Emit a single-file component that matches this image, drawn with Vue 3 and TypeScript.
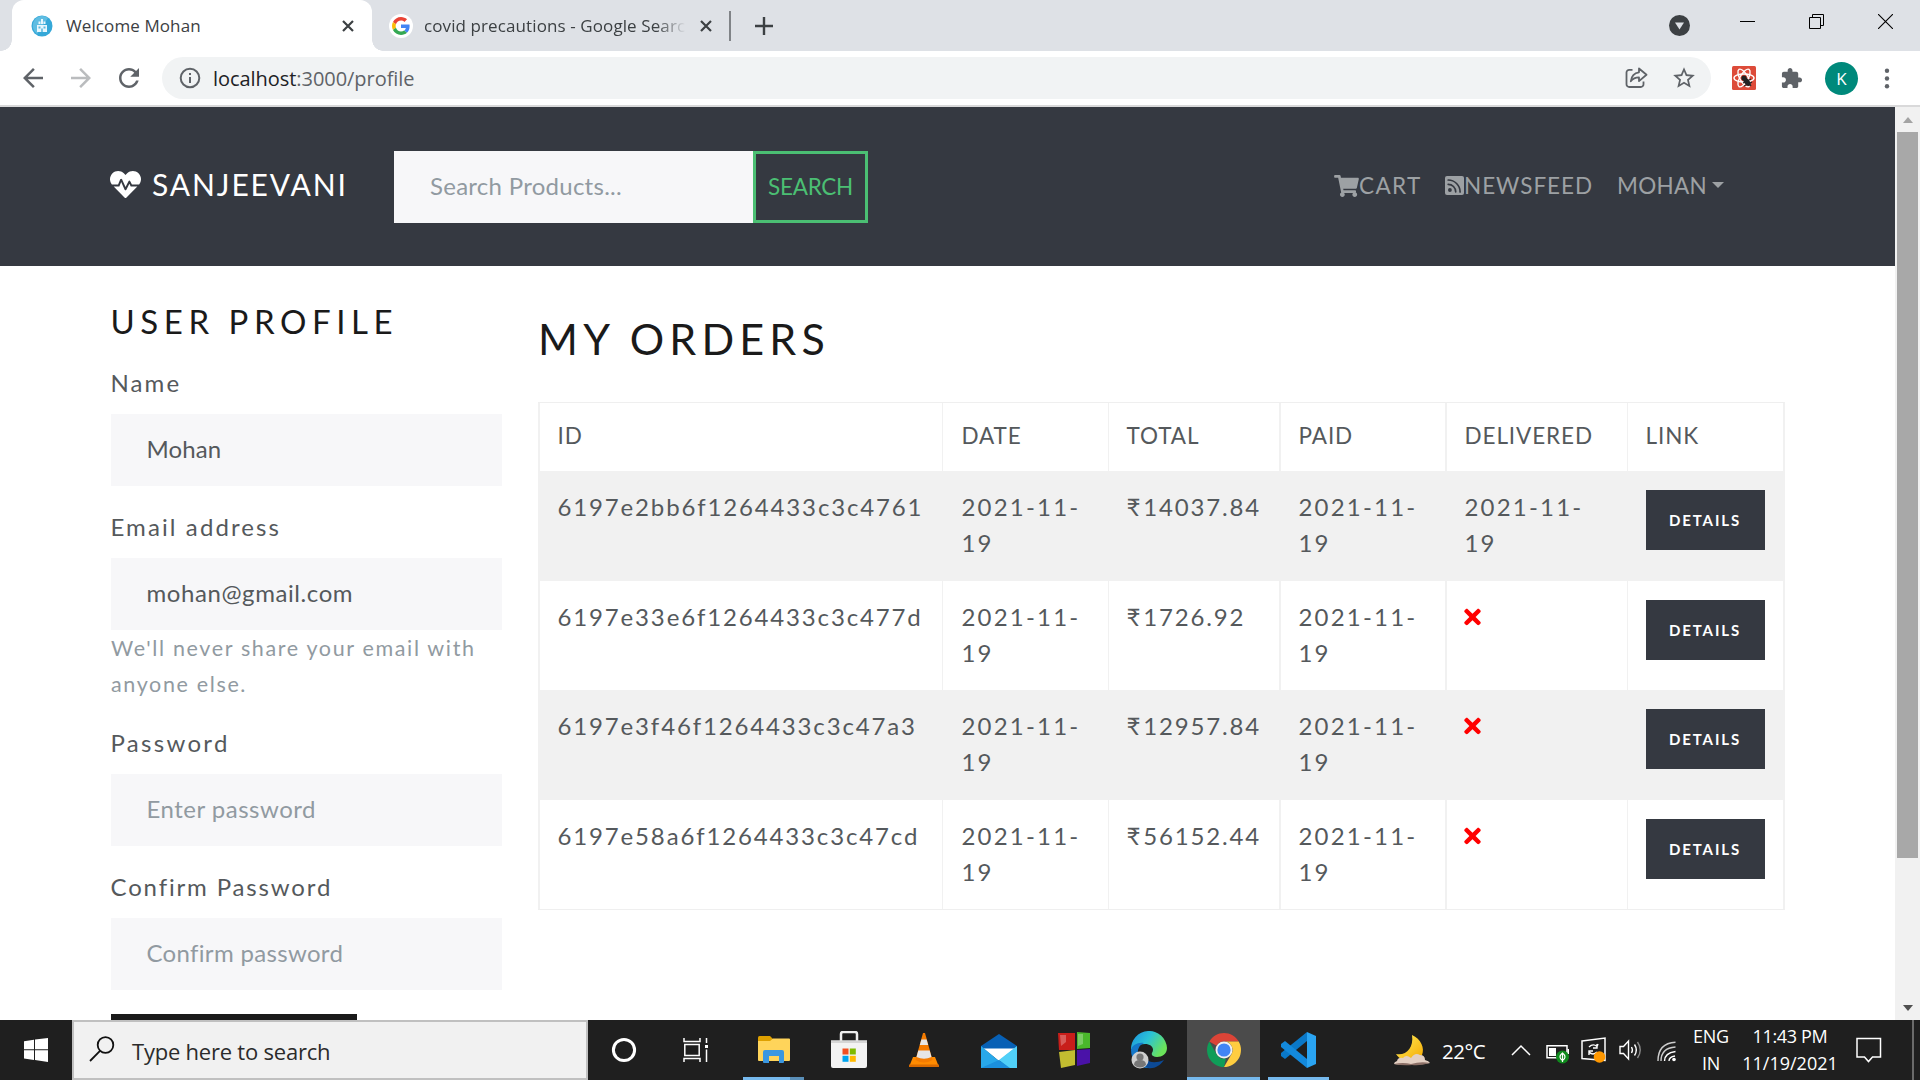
<script setup lang="ts">
interface Order {
  id: string
  date: string
  total: string
  paid: string
  delivered: string | null
}

const day = '2021-11-\n19'
const orders: Order[] = [
  { id: '6197e2bb6f1264433c3c4761', date: day, total: '14037.84', paid: day, delivered: day },
  { id: '6197e33e6f1264433c3c477d', date: day, total: '1726.92', paid: day, delivered: null },
  { id: '6197e3f46f1264433c3c47a3', date: day, total: '12957.84', paid: day, delivered: null },
  { id: '6197e58a6f1264433c3c47cd', date: day, total: '56152.44', paid: day, delivered: null },
]
const headings = ['ID', 'DATE', 'TOTAL', 'PAID', 'DELIVERED', 'LINK']
</script>

<template>
  <div class="screen">
    <div class="tabs">
      <div class="tab active">
        <svg class="fav" width="22" height="24" viewBox="0 0 22 24">
          <circle cx="11" cy="12" r="10.500" fill="#35a8d8" />
          <path d="M3 7a9.500 9.500 0 0 1 14-3L6 20A10 10 0 0 1 3 7z" fill="#7ccbea" opacity=".6" />
          <path d="M6 11h10v7H6zM7.500 7.500h2v2.500h-2zM12.500 7.500h2v2.500h-2zM10 5h2v5h-2z" fill="#e8f7fd" />
          <path d="M7.500 12.500h2v2h-2zM12.500 12.500h2v2h-2zM10.200 14.500h1.600V18h-1.600z" fill="#5bb9df" />
        </svg>
        <span class="tab-title">Welcome Mohan</span>
        <svg class="x" width="12" height="12" viewBox="0 0 12 12"><path d="M1 1l10 10M11 1L1 11" stroke="#3c4043" stroke-width="2.200" /></svg>
      </div>
      <div class="tab second">
        <span class="gwrap">
          <svg width="18" height="18" viewBox="0 0 48 48">
            <path fill="#EA4335" d="M24 9.500c3.540 0 6.710 1.220 9.210 3.600l6.850-6.850C35.900 2.380 30.470 0 24 0 14.620 0 6.510 5.380 2.560 13.220l7.980 6.190C12.430 13.720 17.740 9.500 24 9.500z" />
            <path fill="#4285F4" d="M46.980 24.550c0-1.570-.15-3.090-.38-4.550H24v9.020h12.940c-.58 2.960-2.260 5.480-4.780 7.180l7.730 6c4.510-4.180 7.090-10.360 7.090-17.650z" />
            <path fill="#FBBC05" d="M10.530 28.590c-.48-1.450-.76-2.990-.76-4.590s.27-3.140.76-4.590l-7.980-6.190C.92 16.460 0 20.120 0 24c0 3.880.92 7.540 2.560 10.780l7.970-6.190z" />
            <path fill="#34A853" d="M24 48c6.480 0 11.930-2.130 15.890-5.810l-7.730-6c-2.150 1.450-4.920 2.300-8.160 2.300-6.260 0-11.570-4.220-13.470-9.910l-7.980 6.190C6.510 42.620 14.620 48 24 48z" />
          </svg>
        </span>
        <span class="tab-title fade">covid precautions - Google Search</span>
        <svg class="x" width="12" height="12" viewBox="0 0 12 12"><path d="M1 1l10 10M11 1L1 11" stroke="#3c4043" stroke-width="2.200" /></svg>
      </div>
      <i class="tab-sep"></i>
      <svg class="plus" width="18" height="18" viewBox="0 0 18 18"><path d="M9 0v18M0 9h18" stroke="#3c4043" stroke-width="2.400" /></svg>
      <div class="window-buttons">
        <svg width="21" height="21" viewBox="0 0 21 21" class="down"><circle cx="10.500" cy="10.500" r="10.500" fill="#3c4043" /><path d="M6 7.500h9l-4.500 7z" fill="#dee1e6" /></svg>
        <svg width="15" height="15" viewBox="0 0 15 15"><path d="M0 7.500h15" stroke="#000" /></svg>
        <svg width="15" height="15" viewBox="0 0 15 15" fill="none" stroke="#000"><path d="M.5 3.500h11v11H.5zM3.500 3.500v-3h11v11h-3" /></svg>
        <svg width="15" height="15" viewBox="0 0 15 15"><path d="M0 0l15 15M15 0L0 15" stroke="#000" stroke-width="1.100" /></svg>
      </div>
    </div>

    <div class="toolbar">
      <svg class="nav-ic" width="30" height="30" viewBox="0 0 24 24"><path fill="#5f6368" d="M20 11H7.830l5.590-5.590L12 4l-8 8 8 8 1.410-1.410L7.830 13H20v-2z" /></svg>
      <svg class="nav-ic" width="30" height="30" viewBox="0 0 24 24"><path fill="#babcbe" d="M4 11h12.170l-5.590-5.590L12 4l8 8-8 8-1.410-1.410L16.170 13H4v-2z" /></svg>
      <svg class="nav-ic" width="30" height="30" viewBox="0 0 24 24"><path fill="#5f6368" d="M17.650 6.350C16.200 4.900 14.210 4 12 4c-4.420 0-7.990 3.580-7.990 8s3.570 8 7.990 8c3.730 0 6.840-2.550 7.730-6h-2.080c-.82 2.330-3.040 4-5.650 4-3.310 0-6-2.690-6-6s2.690-6 6-6c1.660 0 3.140.69 4.220 1.780L13 11h7V4l-2.350 2.350z" /></svg>
      <div class="omnibox">
        <svg width="22" height="22" viewBox="0 0 22 22"><circle cx="11" cy="11" r="9.300" fill="none" stroke="#5f6368" stroke-width="2" /><path d="M10 10h2v6h-2zM10 6h2v2h-2z" fill="#5f6368" /></svg>
        <span class="url"><b>localhost</b>:3000/profile</span>
        <svg class="share" width="24" height="24" viewBox="0 0 24 24" fill="none" stroke="#5f6368" stroke-width="1.800" stroke-linejoin="round"><path d="M8.500 3.800H5.200A2.700 2.700 0 0 0 2.500 6.500v11.800A2.700 2.700 0 0 0 5.200 21h11.600a2.700 2.700 0 0 0 2.700-2.700v-2.800" /><path d="M15 2.500l7.500 6.300-7.500 6.300v-3.700c-3.700 0-6.300 1.200-8.200 3.900.6-5 3.400-8.400 8.200-9z" /></svg>
        <svg class="star" width="26" height="26" viewBox="0 0 24 24"><path fill="#5f6368" d="M22 9.240l-7.190-.62L12 2 9.190 8.630 2 9.240l5.460 4.730L5.820 21 12 17.270 18.180 21l-1.630-7.030L22 9.240zM12 15.400l-3.760 2.270 1-4.280-3.320-2.880 4.380-.38L12 6.100l1.710 4.040 4.380.38-3.320 2.880 1 4.280L12 15.400z" /></svg>
      </div>
      <svg class="ext" width="24" height="24" viewBox="0 0 24 24">
        <rect width="24" height="24" rx="1.500" fill="#dd4b39" />
        <g fill="none" stroke="#fff" stroke-width="1.400"><ellipse cx="12" cy="12" rx="10" ry="4" /><ellipse cx="12" cy="12" rx="10" ry="4" transform="rotate(60 12 12)" /><ellipse cx="12" cy="12" rx="10" ry="4" transform="rotate(120 12 12)" /></g>
        <circle cx="12" cy="12" r="2.600" fill="#222" /><ellipse cx="15" cy="16" rx="2.600" ry="4.600" transform="rotate(-40 15 16)" fill="#222" /><path d="M11 17l8-4M12 20l8-4M14 12l5 8" stroke="#222" stroke-width="1.200" />
      </svg>
      <svg class="puzzle" width="23" height="23" viewBox="0 0 24 24"><path fill="#5f6368" d="M20.500 11H19V7c0-1.100-.9-2-2-2h-4V3.500C13 2.120 11.880 1 10.500 1S8 2.120 8 3.500V5H4c-1.100 0-1.990.9-1.990 2v3.800H3.500c1.490 0 2.700 1.210 2.700 2.700s-1.210 2.700-2.700 2.700H2V20c0 1.100.9 2 2 2h3.800v-1.500c0-1.490 1.210-2.700 2.700-2.700 1.490 0 2.700 1.210 2.700 2.700V22H17c1.100 0 2-.9 2-2v-4h1.500c1.380 0 2.500-1.120 2.500-2.500S21.880 11 20.500 11z" /></svg>
      <span class="avatar">K</span>
      <svg width="6" height="21" viewBox="0 0 6 21" fill="#5f6368"><circle cx="3" cy="2.800" r="2.200" /><circle cx="3" cy="10.500" r="2.200" /><circle cx="3" cy="18.200" r="2.200" /></svg>
    </div>

    <div class="viewport">
      <div class="page">
        <header class="navbar">
          <svg class="heart" width="31" height="31" viewBox="0 0 512 512"><path fill="#fff" d="M320.200 243.800l-49.700 99.400c-6 12.100-23.400 11.700-28.900-.6l-56.900-126.300-30 71.700H60.600l182.500 186.500c7.100 7.300 18.600 7.300 25.700 0L451.400 288H342.300l-22.100-44.200zM473.700 73.900l-2.400-2.500c-51.500-52.600-135.800-52.600-187.400 0L256 100l-27.900-28.500c-51.500-52.700-135.900-52.700-187.400 0l-2.400 2.400C-10.400 123.700-12.500 203 31 256h102.400l35.900-86.200c5.400-12.900 23.600-13.100 29.300-.4l58.200 129.300 49-97.900c5.900-11.800 22.700-11.800 28.600 0l27.600 55.200H481c43.500-53 41.400-132.300-7.300-182.100z" /></svg>
          <span class="brand">SANJEEVANI</span>
          <div class="search-field">Search Products...</div>
          <button class="search-btn">SEARCH</button>
          <nav class="links">
            <a class="cart"><svg width="25" height="22" viewBox="0 0 576 512"><path fill="#9da1a4" d="M528.120 301.319l47.273-208C578.806 78.301 567.391 64 551.990 64H159.208l-9.166-44.810C147.758 8.021 137.930 0 126.529 0H24C10.745 0 0 10.745 0 24v16c0 13.255 10.745 24 24 24h69.883l70.248 343.435C147.325 417.100 136 435.222 136 456c0 30.928 25.072 56 56 56s56-25.072 56-56c0-15.674-6.447-29.835-16.824-40h209.647C430.447 426.165 424 440.326 424 456c0 30.928 25.072 56 56 56s56-25.072 56-56c0-22.172-12.888-41.332-31.579-50.405l5.517-24.276c3.413-15.018-8.002-29.319-23.403-29.319H218.117l-6.545-32h293.145c11.206 0 20.920-7.754 23.403-18.681z" /></svg><span>CART</span></a>
            <a class="news"><svg width="19" height="19" viewBox="0 0 19 19"><rect width="19" height="19" rx="2" fill="#9da1a4" /><circle cx="4.900" cy="14" r="1.900" fill="#353941" /><path d="M3.200 8.300a7.500 7.500 0 0 1 7.500 7.500M3.200 4a12 12 0 0 1 11.900 11.900" fill="none" stroke="#353941" stroke-width="1.700" stroke-linecap="round" /></svg><span>NEWSFEED</span></a>
            <a class="user"><span>MOHAN</span><i class="caret"></i></a>
          </nav>
        </header>

        <main class="content">
          <section class="profile">
            <h2>USER PROFILE</h2>
            <label class="s-name">Name</label>
            <div class="field v-name">Mohan</div>
            <label class="s-email">Email address</label>
            <div class="field v-email">mohan@gmail.com</div>
            <small>We'll never share your email with<br />anyone else.</small>
            <label class="s-pass">Password</label>
            <div class="field empty">Enter password</div>
            <label class="s-confirm">Confirm Password</label>
            <div class="field empty confirm">Confirm password</div>
            <div class="update"></div>
          </section>

          <section class="orders">
            <h1>MY ORDERS</h1>
            <table>
              <colgroup><col class="c0" /><col class="c1" /><col class="c2" /><col class="c3" /><col class="c4" /><col class="c5" /></colgroup>
              <thead>
                <tr><th v-for="h in headings" :key="h">{{ h }}</th></tr>
              </thead>
              <tbody>
                <tr v-for="o in orders" :key="o.id">
                  <td>{{ o.id }}</td>
                  <td class="date">{{ o.date }}</td>
                  <td><span class="rupee">₹</span>{{ o.total }}</td>
                  <td class="date">{{ o.paid }}</td>
                  <td class="date"><template v-if="o.delivered">{{ o.delivered }}</template><svg v-else class="cross" width="17" height="24" viewBox="0 0 352 512"><path fill="#f00" d="M242.720 256l100.070-100.070c12.280-12.280 12.280-32.190 0-44.480l-22.240-22.240c-12.280-12.280-32.190-12.280-44.480 0L176 189.280 75.930 89.210c-12.280-12.280-32.190-12.280-44.480 0L9.210 111.450c-12.280 12.280-12.280 32.190 0 44.480L109.280 256 9.210 356.070c-12.280 12.280-12.280 32.190 0 44.480l22.240 22.240c12.280 12.280 32.200 12.280 44.480 0L176 322.720l100.070 100.070c12.280 12.280 32.200 12.280 44.480 0l22.240-22.240c12.280-12.280 12.280-32.190 0-44.480L242.720 256z" /></svg></td>
                  <td><button class="details">DETAILS</button></td>
                </tr>
              </tbody>
            </table>
          </section>
        </main>
      </div>
      <div class="scrollbar">
        <i class="up"></i>
        <div class="thumb"></div>
        <i class="dn"></i>
      </div>
    </div>

    <footer class="taskbar">
      <div class="start"><svg width="24" height="24" viewBox="0 0 24 24" fill="#fff"><path d="M0 3.200L10 1.800v9.500H0zM11 1.600L24 0v11.300H11zM0 12.300h10v9.600L0 20.600zM11 12.300h13V24l-13-1.900z" /></svg></div>
      <div class="search">
        <svg width="26" height="26" viewBox="0 0 26 26" fill="none" stroke="#111" stroke-width="1.800"><circle cx="16.500" cy="9" r="7.800" /><path d="M11 14.800L1 25" /></svg>
        <span>Type here to search</span>
      </div>
      <div class="cell w72"><svg width="26" height="26" viewBox="0 0 26 26"><circle cx="13" cy="13" r="10.600" fill="none" stroke="#fff" stroke-width="3" /></svg></div>
      <div class="cell w72"><svg width="26" height="24" viewBox="0 0 26 24" fill="none" stroke="#fff" stroke-width="1.500"><path d="M1 0v3.500h16V0M1 24v-3.500h16V24M1.800 6.500h14.400v11H1.800zM23.500 0v5M23.500 11.500V24" /><path d="M22 7h3v3h-3z" fill="#fff" stroke="none" /></svg></div>
      <div class="cell explorer">
        <svg width="32" height="28" viewBox="0 0 32 28"><path d="M0 1.500Q0 0 1.500 0H12l3 3v5H0z" fill="#dea000" /><path d="M0 5h12l3-2.500h16q1 0 1 1V24q0 1-1 1H1q-1 0-1-1z" fill="#ffd45a" /><path d="M5 26V16q0-2 2-2h17q2 0 2 2v10q0 1-1 1h-4v-7H11v7H6q-1 0-1-1z" fill="#3b97e0" /></svg>
        <i class="bar split"></i>
      </div>
      <div class="cell">
        <svg width="36" height="38" viewBox="0 0 36 38"><path d="M10 12V3q0-2 2-2h12q2 0 2 2v9" fill="none" stroke="#eee" stroke-width="2.500" /><path d="M0 9.500h36V35q0 2-2 2H2q-2 0-2-2z" fill="#f3f3f3" /><path d="M0 9.500h36v2.500H0z" fill="#d6d6d6" /><path d="M11.500 17.500h6v6h-6z" fill="#f25022" /><path d="M18.800 17.500h6v6h-6z" fill="#7fba00" /><path d="M11.500 24.800h6v6h-6z" fill="#00a4ef" /><path d="M18.800 24.800h6v6h-6z" fill="#ffb900" /></svg>
      </div>
      <div class="cell">
        <svg width="32" height="36" viewBox="0 0 32 36"><path d="M5 25h22l4 10H1z" fill="#ff8b00" /><path d="M1 32.500h30V35H1z" fill="#d96a00" /><path d="M15 1h2l7.500 27q-8.500 5-17 0z" fill="#f47b00" /><path d="M13.400 7.500h5.200l1.600 5.500h-8.400zM10.300 18.500h11.400l1.800 6.500q-7.500 3.500-15 0z" fill="#e6e6e6" /></svg>
      </div>
      <div class="cell">
        <svg width="36" height="35" viewBox="0 0 36 35"><path d="M0 13L18 1l18 12v4H0z" fill="#0760b5" /><path d="M2.500 15.500h31L18 28z" fill="#fff" /><path d="M0 13l18 15 9 7H0z" fill="#28a8ea" /><path d="M36 13v22H27l-9-8z" fill="#50d0f8" /><path d="M0 35l18-8 11 8z" fill="#1b90dd" /></svg>
      </div>
      <div class="cell">
        <svg width="34" height="36" viewBox="0 0 34 36"><path d="M1 1h17v17H2z" fill="#c81e1a" /><path d="M20 0l13 1v15l-13 1z" fill="#4ab82b" /><path d="M2 20l16-2v15L4 36z" fill="#c2bd30" /><path d="M20 18l13-1v14l-13 3z" fill="#4a12a8" /><path d="M3 3h6v7L4 14zM21 2h5v10l-5 2z" fill="#fff" opacity=".28" /></svg>
      </div>
      <div class="cell">
        <svg width="38" height="38" viewBox="0 0 38 38">
          <defs><linearGradient id="eg" x1="0" y1="0" x2="1" y2=".5"><stop offset="0" stop-color="#1a8fe0" /><stop offset=".5" stop-color="#2bc3d6" /><stop offset="1" stop-color="#6be35a" /></linearGradient></defs>
          <path d="M1 19A18 18 0 0 1 37 17c0 6-5 9-10 9-4 0-6-2-5-4 3-5-1-9-7-9-7 0-12 3-14 6z" fill="url(#eg)" />
          <path d="M1 19c1-5 7-8 13-7-5 2-7 7-6 12 1 7 7 11 13 13C9 38 1 30 1 19z" fill="#1477c9" />
          <path d="M13 21c0 9 9 13 21 8-4 6-10 9-16 8-6-3-9-10-5-16z" fill="#0c4a96" />
          <circle cx="10" cy="29" r="8.500" fill="#cfcfcf" /><circle cx="10" cy="26" r="3.600" fill="#777" /><path d="M4 34q0-5 6-5t6 5q-6 5-12 0z" fill="#777" />
        </svg>
      </div>
      <div class="cell on">
        <svg width="34" height="34" viewBox="0 0 34 34">
          <path d="M2.300 8.500A17 17 0 0 1 31.700 8.500H17a8.500 8.500 0 0 0-7.400 4.300z" fill="#db4437" />
          <path d="M2.300 8.500l7.300 12.700A8.500 8.500 0 0 0 19 25.300L17 34A17 17 0 0 1 2.300 8.500z" fill="#0f9d58" />
          <path d="M31.700 8.500A17 17 0 0 1 17 34l7.400-12.700A8.500 8.500 0 0 0 17 8.500z" fill="#ffcd40" />
          <circle cx="17" cy="17" r="8.500" fill="#f1f1f1" /><circle cx="17" cy="17" r="6.600" fill="#4285f4" />
        </svg>
        <i class="bar full"></i>
      </div>
      <div class="cell vs">
        <svg width="36" height="36" viewBox="0 0 36 36"><path d="M26 0l9 4v28l-9 4z" fill="#2aa4f2" /><path d="M26 0v9L4 27l-4-3v-3z" fill="#0a78c8" /><path d="M26 36v-9L4 9l-4 3v3z" fill="#1389dc" /></svg>
        <i class="bar"></i>
      </div>

      <div class="tray">
        <svg class="moon" width="36" height="31" viewBox="0 0 36 31"><defs><linearGradient id="mg" x1="0" y1="0" x2="1" y2="1"><stop offset="0" stop-color="#ffef5c" /><stop offset="1" stop-color="#f5a800" /></linearGradient></defs><path d="M18 0c9 4 13 13 10 20-4 9-20 9-26-1 10 2 18-6 16-19z" fill="url(#mg)" /><path d="M3 26q1-4 6-3 3-4 8 0 4-6 9-3 5 0 5 5 4 1 5 3-9 2-17 1-9 2-19 0 0-2 3-3z" fill="#e3cfc2" /><path d="M0 29q9-2 17 0 10-3 19-1-10 3-18 2-9 1-18-1z" fill="#8b6f66" /></svg>
        <span class="temp">22°C</span>
        <svg class="chev" width="20" height="12" viewBox="0 0 20 12"><path d="M1 11l9-9 9 9" fill="none" stroke="#fff" stroke-width="1.500" /></svg>
        <svg class="batt" width="24" height="24" viewBox="0 0 24 24"><path d="M1 4.800h20v12H1z" fill="none" stroke="#fff" stroke-width="1.500" /><path d="M3 7h7v8H3zM21.500 8h1.500v5h-1.500z" fill="#fff" /><circle cx="16.500" cy="16" r="6.500" fill="#0f8a1d" /><path d="M16.500 12q-5 4 0 7.500 5-3.500 0-7.500zM16.500 13v8" fill="none" stroke="#fff" stroke-width="1.200" /></svg>
        <svg class="upd" width="26" height="26" viewBox="0 0 26 26"><path d="M1 4l23-3v22.500L1 21.500z" fill="none" stroke="#fff" stroke-width="1.500" /><path d="M8 10q4-4 8-.5l1-2.500M16 7v4h-4M8 18v-4h4M8 15q4 4 8 0" fill="none" stroke="#fff" stroke-width="1.400" /><circle cx="18.500" cy="20" r="5.800" fill="#ff9800" /></svg>
        <svg class="spk" width="24" height="22" viewBox="0 0 24 22" fill="none" stroke="#fff" stroke-width="1.400"><path d="M1 7.500h3.500L9.500 2v18l-5-5.500H1zM12.500 8q1.800 3 0 6M15.500 5.500q3.600 5.500 0 11" /><path d="M18.500 3q5.500 8 0 16" stroke="#888" /></svg>
        <svg class="wifi" width="20" height="21" viewBox="0 0 20 21" fill="none" stroke="#fff" stroke-width="1.400"><path d="M12 20q0-4 6-5M7.500 20q0-8 11-9.500" /><path d="M4 20Q4 7 18.500 6M1 20Q1 2 18.500 1.200" stroke="#ccc" /><circle cx="17" cy="18.500" r="1.800" fill="#fff" stroke="none" /></svg>
        <div class="lang"><span>ENG</span><span>IN</span></div>
        <div class="clock"><span class="time">11:43 PM</span><span>11/19/2021</span></div>
        <svg class="note" width="26" height="26" viewBox="0 0 26 26"><path d="M1 1.500h23.500v18.500h-8L12.500 24.500 8.500 20H1z" fill="none" stroke="#fff" stroke-width="1.500" /></svg>
        <i class="peek"></i>
      </div>
    </footer>
  </div>
</template>

<style>
body { margin: 0; background: #fff; overflow: hidden; }
</style>

<style scoped>
* { box-sizing: border-box; }
.screen { width: 1920px; height: 1080px; display: flex; flex-direction: column; overflow: hidden; font-family: "Open Sans", "Liberation Sans", sans-serif; white-space: nowrap; }
svg { display: block; flex: none; }
button { border: 0; padding: 0; font-family: inherit; }

.tabs { height: 51px; flex: none; background: #dee1e6; display: flex; align-items: center; }
.tab { height: 51px; display: flex; align-items: center; flex: none; }
.tab.active { position: relative; width: 360px; margin-left: 12px; padding-left: 19px; background: #fff; border-radius: 12px 12px 0 0; }
.tab.active::before, .tab.active::after { content: ""; position: absolute; bottom: 0; width: 11px; height: 11px; }
.tab.active::before { left: -11px; background: radial-gradient(circle at 0 0, transparent 10.5px, #fff 11px); }
.tab.active::after { right: -11px; background: radial-gradient(circle at 100% 0, transparent 10.5px, #fff 11px); }
.tab-title { font-size: 17px; line-height: 26px; letter-spacing: 0.1px; color: #3c4043; }
.active .tab-title { width: 256px; margin: 0 20px 0 13px; }
.second { padding-left: 17px; }
.gwrap { width: 24px; height: 24px; border-radius: 50%; background: #fff; display: flex; align-items: center; justify-content: center; }
.fade { width: 262px; margin: 0 14px 0 11px; overflow: hidden; -webkit-mask-image: linear-gradient(90deg, #000 232px, transparent); mask-image: linear-gradient(90deg, #000 232px, transparent); }
.tab-sep { width: 1.5px; height: 30px; margin-left: 17px; background: #808387; }
.plus { margin-left: 24px; }
.window-buttons { margin-left: auto; display: flex; align-items: center; padding: 0 27px 8px 0; }
.window-buttons svg { margin-left: 54px; }
.window-buttons .down { margin: 8px -4px 0 0; }
.window-buttons svg:nth-child(2) { margin-left: 54px; }

.toolbar { height: 56px; flex: none; display: flex; align-items: center; padding: 0 30px 0 18px; border-bottom: 2px solid #d9d9da; background: #fff; }
.nav-ic { margin-right: 18px; }
.omnibox { width: 1549px; height: 42px; border-radius: 21px; background: #f1f3f4; display: flex; align-items: center; padding-left: 17px; }
.url { margin: 1px 0 0 12px; font-size: 20px; line-height: 28px; letter-spacing: -0.05px; color: #5f6368; }
.url b { font-weight: 400; color: #202124; }
.share { margin-left: auto; }
.star { margin: 0 14px 0 23px; }
.ext { margin-left: 21px; }
.puzzle { margin-left: 24px; }
.avatar { width: 33px; height: 33px; margin: 0 auto 0 22px; border-radius: 50%; background: #00897b; color: #fff; font-size: 17px; line-height: 33px; text-align: center; }

.viewport { height: 913px; flex: none; display: flex; overflow: hidden; }
.page { width: 1895px; height: 913px; overflow: hidden; font-family: Lato, "Open Sans", sans-serif; }
.navbar { height: 159px; background: #353941; display: flex; align-items: center; padding: 0 0 1px 110px; }
.heart { margin-top: -4px; }
.brand { width: 201px; margin: -4px 41px 0 11px; font-size: 30px; line-height: 40px; letter-spacing: 1.9px; color: #fff; }
.search-field { width: 359px; height: 72px; margin-top: 2px; padding-left: 36px; background: #f7f7f9; color: #919aa1; font-size: 24px; line-height: 70px; letter-spacing: 0.27px; }
.search-btn { width: 115px; height: 72px; margin-top: 2px; border: 3px solid #4bbf73; background: transparent; color: #4bbf73; font-size: 22.5px; line-height: 64px; letter-spacing: -0.28px; }
.links { display: flex; margin: -1px 0 0 466px; color: #9da1a4; font-size: 22.5px; line-height: 36px; }
.links a { display: flex; align-items: center; }
.cart { width: 111px; letter-spacing: 1.4px; }
.news { width: 172px; letter-spacing: 0.96px; }
.user { letter-spacing: 0.3px; }
.caret { margin: -1px 0 0 5px; border: 6.5px solid transparent; border-top-color: #9da1a4; border-bottom: 0; }

.content { display: flex; padding-left: 111px; color: #55595c; font-size: 24px; line-height: 36px; }
.profile { width: 391px; margin-right: 36px; padding-top: 35px; flex: none; }
h2 { margin: 0 0 24px -0.5px; color: #1a1a1a; font-size: 33px; font-weight: 400; line-height: 40px; letter-spacing: 5.55px; }
label { display: block; margin: 0 0 13px -0.5px; }
.s-name { letter-spacing: 2.1px; }
.s-email { letter-spacing: 2.1px; }
.s-pass { letter-spacing: 2.3px; }
.s-confirm { letter-spacing: 1.85px; }
.field { height: 72px; padding-left: 35.5px; background: #f7f7f9; line-height: 69px; }
.field + label { margin-top: 23px; }
.v-name { letter-spacing: 0.1px; }
.v-email { letter-spacing: 0.58px; }
.empty { color: #919aa1; letter-spacing: 0.5px; }
.confirm { letter-spacing: 0.32px; }
small { display: block; margin-bottom: 23px; color: #919aa1; font-size: 21.5px; letter-spacing: 1.64px; }
.update { width: 246px; height: 70px; margin-top: 24px; background: #1a1a1a; }

.orders { padding-top: 47px; flex: none; }
h1 { margin: 0 0 37px; color: #1a1a1a; font-size: 43px; font-weight: 400; line-height: 52px; letter-spacing: 5.2px; }
table { width: 1247px; table-layout: fixed; border-spacing: 0; border-top: 1px solid #efefef; border-bottom: 1px solid #efefef; border-right: 2px solid #f1f1f1; letter-spacing: 1.85px; }
.c0 { width: 404px; }
.c1 { width: 166px; }
.c2 { width: 171px; }
.c3 { width: 166px; }
.c4 { width: 182px; }
.c5 { width: 156px; }
th, td { padding: 18px 0 0 17.5px; border-left: 1px solid #f1f1f1; text-align: left; vertical-align: top; font-weight: 400; }
th:nth-child(2), td:nth-child(2) { padding-left: 18.5px; }
th:nth-child(1), td:nth-child(1), th:nth-child(4), td:nth-child(4), th:nth-child(5), td:nth-child(5) { border-left-width: 2px; }
th { height: 68px; padding-top: 15px; font-size: 22.5px; letter-spacing: 0.9px; }
td { height: 109.5px; }
tbody tr:nth-child(odd) { background: #f1f1f1; }
.date { white-space: pre; letter-spacing: 2.2px; }
.rupee { margin-right: 1px; }
.cross { margin: 6px 0 0 -1px; }
.details { display: block; width: 119px; height: 60px; margin-top: 1px; background: #353941; color: #fff; font-size: 15px; font-weight: 700; line-height: 58px; letter-spacing: 1.9px; }

.scrollbar { width: 25px; height: 913px; background: #f1f1f1; display: flex; flex-direction: column; align-items: center; }
.scrollbar i { border: 5.5px solid transparent; }
.scrollbar .up { margin-top: 10px; border-bottom: 6px solid #a3a3a3; border-top: 0; }
.thumb { width: 21px; height: 726px; margin: 9px 0 147px; background: #a8a8a8; }
.scrollbar .dn { border-top: 6px solid #505050; border-bottom: 0; }

.taskbar { height: 60px; flex: none; background: #1f1f1f; display: flex; color: #fff; }
.start { width: 72px; display: flex; align-items: center; justify-content: center; }
.search { width: 516px; height: 60px; border: 2px solid #c0c0c0; background: #f1f1f1; display: flex; align-items: center; padding: 0 0 2px 15px; color: #2b2b2b; font-size: 22px; letter-spacing: -0.22px; }
.search span { margin: 3px 0 0 17px; line-height: 30px; }
.cell { position: relative; width: 75px; display: flex; align-items: center; justify-content: center; flex: none; }
.w72 { width: 72px; }
.explorer { margin-left: 4px; }
.on { width: 73px; margin-left: 1px; background: #4b4b4b; }
.vs { margin-left: 1px; }
.bar { position: absolute; left: 7px; right: 7px; bottom: 0; height: 3px; background: #76b9ed; }
.bar.full { left: 0; right: 0; }
.bar.split { background: linear-gradient(90deg, #76b9ed 47px, #5a8fb8 47px); }
.tray { flex: 1; display: flex; align-items: center; font-size: 18px; }
.moon { margin-left: 58px; }
.temp { width: 50px; margin: 2px 0 0 12px; font-size: 20.5px; letter-spacing: -0.5px; }
.chev { margin: -1px 15px 0 19px; }
.batt { margin: 6px 11px 0 0; }
.upd { margin-right: 12px; }
.spk { margin-right: 14px; }
.wifi { margin: 3px 16px 0 0; }
.lang, .clock { display: flex; flex-direction: column; align-items: center; line-height: 27.5px; }
.lang { width: 36px; letter-spacing: -0.28px; }
.clock { width: 96px; margin-left: 13px; }
.time { letter-spacing: -0.34px; }
.note { margin: 0 0 0 auto; }
.peek { width: 2px; height: 60px; margin: 0 6px 0 30px; background: #6a6a6a; }
</style>
